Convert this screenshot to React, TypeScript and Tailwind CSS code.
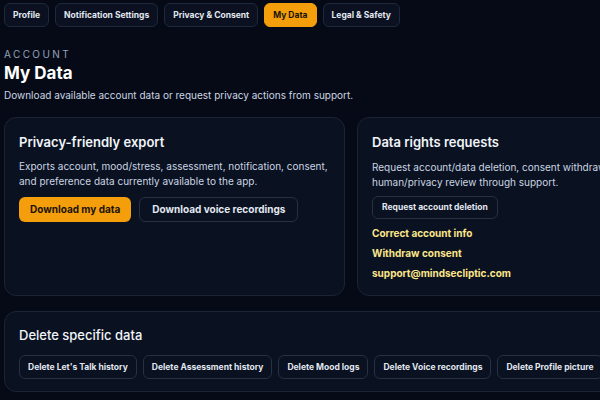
const TABS = ['Profile', 'Notification Settings', 'Privacy & Consent', 'My Data', 'Legal & Safety'];

const DELETE_ACTIONS = [
  "Delete Let's Talk history",
  'Delete Assessment history',
  'Delete Mood logs',
  'Delete Voice recordings',
  'Delete Profile picture',
];

const LINKS = ['Correct account info', 'Withdraw consent', 'support@mindsecliptic.com'];

function Tab({ label, active }: { label: string; active?: boolean }) {
  return (
    <button
      className={`h-6 px-2 rounded-md border text-[8.5px] font-bold whitespace-nowrap ${
        active ? 'bg-[#f59e0b] border-[#f59e0b] text-[#1a1305]' : 'bg-[#0b1120] border-[#1e293b] text-[#e2e8f0]'
      }`}
    >
      {label}
    </button>
  );
}

function SmallButton({ label }: { label: string }) {
  return (
    <button className="h-6 px-2 rounded-md border border-[#263142] bg-[#0a1120] text-[#e2e8f0] text-[8.5px] font-bold whitespace-nowrap">
      {label}
    </button>
  );
}

export default function App() {
  return (
    <div className="w-[600px] h-[400px] overflow-hidden bg-[#060a17] font-['Inter',sans-serif] text-[#e5e7eb]">
      <div className="w-[694px] ml-1 pt-[3px]">
        <div className="flex gap-1.5">
          {TABS.map((t) => (
            <Tab key={t} label={t} active={t === 'My Data'} />
          ))}
        </div>

        <div className="mt-5">
          <div className="text-[10px] leading-[14px] tracking-[0.24em] text-[#94a3b8]">ACCOUNT</div>
          <h1 className="text-[17px] leading-6 font-bold text-white">My Data</h1>
          <p className="mt-0.5 text-[10px] leading-4 text-[#cbd5e1]">
            Download available account data or request privacy actions from support.
          </p>
        </div>

        <div className="mt-[14px] grid grid-cols-2 gap-3 h-[176px]">
          <section className="rounded-xl border border-[#1b2435] bg-[#0a1121] p-[14px]">
            <h2 className="text-[13px] leading-5 font-semibold text-[#f1f5f9]">Privacy-friendly export</h2>
            <p className="mt-[7px] text-[10px] leading-[15px] text-[#cbd5e1]">
              Exports account, mood/stress, assessment, notification, consent, and preference data currently
              available to the app.
            </p>
            <div className="mt-2 flex gap-2">
              <button className="h-[25px] px-[11px] rounded-md bg-[#f59e0b] text-[#1a1305] text-[10px] font-bold">
                Download my data
              </button>
              <button className="h-[25px] px-3 rounded-md border border-[#263142] bg-[#0a1120] text-[#e2e8f0] text-[10px] font-bold">
                Download voice recordings
              </button>
            </div>
          </section>

          <section className="rounded-xl border border-[#1b2435] bg-[#0a1121] p-[14px]">
            <h2 className="text-[13px] leading-5 font-semibold text-[#f1f5f9]">Data rights requests</h2>
            <p className="mt-2 text-[10px] leading-[15px] text-[#cbd5e1] whitespace-nowrap">
              Request account/data deletion, consent withdrawal, correction, or
              <br />
              human/privacy review through support.
            </p>
            <div className="mt-1.5 flex">
              <button className="h-[23px] px-[9px] rounded-md border border-[#263142] bg-[#0a1120] text-[#e2e8f0] text-[8.5px] font-bold">
                Request account deletion
              </button>
            </div>
            <div className="mt-1.5 flex flex-col gap-1">
              {LINKS.map((l) => (
                <a key={l} className="text-[10px] leading-4 font-bold text-[#fde68a]">
                  {l}
                </a>
              ))}
            </div>
          </section>
        </div>

        <section className="mt-[18px] rounded-xl border border-[#1b2435] bg-[#0a1121] px-[14px] pt-[13px] pb-[12px]">
          <h2 className="text-[13px] leading-5 font-medium text-[#f1f5f9]">Delete specific data</h2>
          <div className="mt-[10px] flex gap-1.5">
            {DELETE_ACTIONS.map((a) => (
              <SmallButton key={a} label={a} />
            ))}
          </div>
        </section>
      </div>
    </div>
  );
}
